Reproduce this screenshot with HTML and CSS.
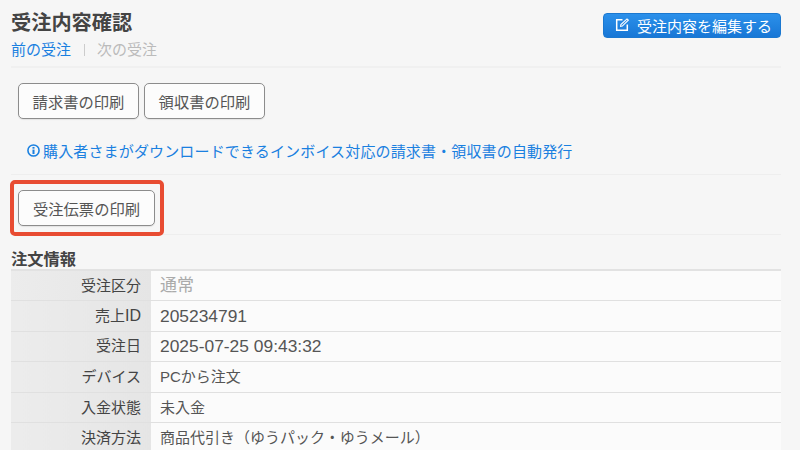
FILE: index.html
```html
<!DOCTYPE html>
<html lang="ja">
<head>
<meta charset="utf-8">
<title>受注内容確認</title>
<link rel="stylesheet" href="styles.css">
</head>
<body>
<main class="page">
  <header class="head">
    <div class="head-left">
      <h1 class="title">受注内容確認</h1>
      <nav class="pager"><a class="link">前の受注</a><span class="sep"></span><span class="muted">次の受注</span></nav>
    </div>
    <a class="edit-btn">
      <svg class="edit-icon" viewBox="0 0 14 14" width="14" height="14" fill="none" stroke="currentColor" stroke-width="1.5"><path d="M7.5 1.7H1.7v10.6h10.6V6.5"/><path d="M5.6 8.4l.3-1.8L12 .9l1.3 1.3-6 5.9z" stroke-width="1.1"/></svg>
      受注内容を編集する
    </a>
  </header>
  <section class="print-row">
    <button class="btn">請求書の印刷</button>
    <button class="btn">領収書の印刷</button>
  </section>
  <p class="info">
    <svg class="info-icon" viewBox="0 0 14 14" width="13" height="13"><circle cx="7" cy="7" r="6" fill="none" stroke="currentColor" stroke-width="1.7"/><rect x="5.9" y="6" width="2.2" height="4.8" fill="currentColor"/><rect x="5.9" y="3.2" width="2.2" height="1.8" fill="currentColor"/></svg>
    <a class="link info-text">購入者さまがダウンロードできるインボイス対応の請求書・領収書の自動発行</a>
  </p>
  <section class="slip-row">
    <div class="highlight"><button class="btn btn-wide">受注伝票の印刷</button></div>
  </section>
  <h2 class="section-title">注文情報</h2>
  <table class="info-table">
    <tr><th>受注区分</th><td class="big-muted">通常</td></tr>
    <tr><th>売上<span class="id">ID</span></th><td class="num">205234791</td></tr>
    <tr><th>受注日</th><td class="num">2025-07-25 09:43:32</td></tr>
    <tr><th>デバイス</th><td>PCから注文</td></tr>
    <tr><th>入金状態</th><td>未入金</td></tr>
    <tr><th>決済方法</th><td>商品代引き（ゆうパック・ゆうメール）</td></tr>
  </table>
</main>
</body>
</html>
```
FILE: styles.css
```css
* { box-sizing: border-box; }
html, body { margin: 0; height: 450px; overflow: hidden; }
body {
  background: #f6f6f6;
  color: #444;
  font-family: "Liberation Sans", "Noto Sans CJK JP", sans-serif;
  font-size: 15px;
}
.page { padding: 11px 19px 0 11px; }
.head {
  display: flex;
  justify-content: space-between;
  align-items: flex-start;
  height: 57px;
  border-bottom: 2px solid #f0f0f0;
}
.title { margin: 0; font-size: 20.2px; line-height: 24px; font-weight: 700; color: #444; }
.pager { display: flex; align-items: center; font-size: 15px; line-height: 20px; margin-top: 5px; }
.link { color: #1a80e0; }
.muted { color: #bbb; }
.sep { width: 1px; height: 12px; background: #ccc; margin: 0 12px 0 13px; }
.edit-btn {
  display: flex;
  align-items: center;
  gap: 8px;
  width: 178px;
  height: 25px;
  margin-top: 2px;
  padding: 0 0 1px 11px;
  border-radius: 4px;
  border: 1px solid #1b78d0;
  background: linear-gradient(#2b90ea, #1877d6);
  color: #fff;
  font-size: 15px;
}
.edit-icon { flex: none; }
.print-row { display: flex; gap: 5px; padding: 15px 0 0 7px; }
.btn {
  width: 121px;
  height: 36px;
  padding: 0 0 1px;
  border: 1px solid #8c8c8c;
  border-radius: 5px;
  background: #fcfcfc;
  box-shadow: 0 1px 1px rgba(0, 0, 0, 0.08);
  color: #555;
  font: inherit;
  font-size: 15.3px;
}
.btn-wide { width: 137px; }
.info {
  display: flex;
  align-items: center;
  gap: 3px;
  height: 48px;
  margin: 8px 0 0;
  padding: 0 0 0 16px;
  color: #1a80e0;
  font-size: 15px;
  border-bottom: 1px solid #eee;
}
.info-text { letter-spacing: 0.15px; }
.slip-row { height: 60px; padding-top: 5px; border-bottom: 1px solid #eee; }
.highlight {
  width: 154px;
  height: 56px;
  margin-left: -1px;
  padding: 6px 4px;
  border: 4px solid #e84c32;
  border-radius: 5px;
  background: #f6f6f6;
}
.section-title { margin: 14px 0 0; font-size: 16.25px; line-height: 20px; font-weight: 700; color: #444; }
.info-table { width: 100%; border-collapse: collapse; border-top: 2px solid #e2e2e2; }
.info-table th, .info-table td {
  height: 30.6px;
  padding: 0;
  border-bottom: 1px solid #e0e0e0;
  font-weight: 400;
  line-height: 20px;
}
.info-table th {
  width: 140px;
  text-align: right;
  padding-right: 10px;
  background: linear-gradient(90deg, #ececec, #e5e5e5);
  color: #444;
}
.info-table td { padding-left: 9px; background: #fbfbfb; color: #555; }
.info-table td.big-muted { font-size: 17px; color: #aaa; }
.info-table td.num { font-size: 17.4px; }
.id { font-size: 16px; }
```
